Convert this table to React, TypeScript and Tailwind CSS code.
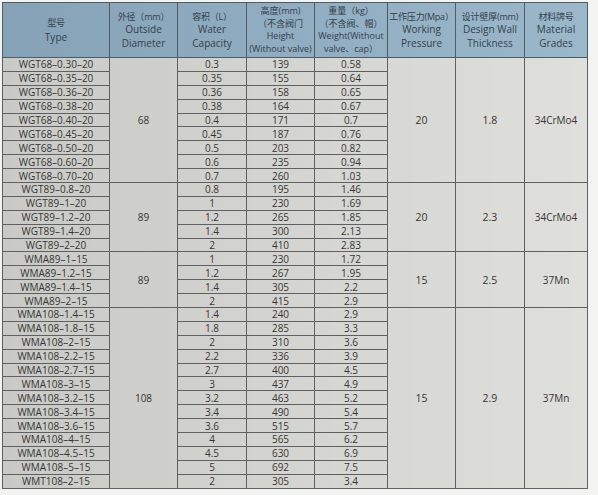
type Group = {
  dia: string;
  pressure: string;
  wall: string;
  mat: string;
  rows: [string, string, string, string][];
};

const groups: Group[] = [
  {
    dia: "68",
    pressure: "20",
    wall: "1.8",
    mat: "34CrMo4",
    rows: [
      ["WGT68–0.30–20", "0.3", "139", "0.58"],
      ["WGT68–0.35–20", "0.35", "155", "0.64"],
      ["WGT68–0.36–20", "0.36", "158", "0.65"],
      ["WGT68–0.38–20", "0.38", "164", "0.67"],
      ["WGT68–0.40–20", "0.4", "171", "0.7"],
      ["WGT68–0.45–20", "0.45", "187", "0.76"],
      ["WGT68–0.50–20", "0.5", "203", "0.82"],
      ["WGT68–0.60–20", "0.6", "235", "0.94"],
      ["WGT68–0.70–20", "0.7", "260", "1.03"],
    ],
  },
  {
    dia: "89",
    pressure: "20",
    wall: "2.3",
    mat: "34CrMo4",
    rows: [
      ["WGT89–0.8–20", "0.8", "195", "1.46"],
      ["WGT89–1–20", "1", "230", "1.69"],
      ["WGT89–1.2–20", "1.2", "265", "1.85"],
      ["WGT89–1.4–20", "1.4", "300", "2.13"],
      ["WGT89–2–20", "2", "410", "2.83"],
    ],
  },
  {
    dia: "89",
    pressure: "15",
    wall: "2.5",
    mat: "37Mn",
    rows: [
      ["WMA89–1–15", "1", "230", "1.72"],
      ["WMA89–1.2–15", "1.2", "267", "1.95"],
      ["WMA89–1.4–15", "1.4", "305", "2.2"],
      ["WMA89–2–15", "2", "415", "2.9"],
    ],
  },
  {
    dia: "108",
    pressure: "15",
    wall: "2.9",
    mat: "37Mn",
    rows: [
      ["WMA108–1.4–15", "1.4", "240", "2.9"],
      ["WMA108–1.8–15", "1.8", "285", "3.3"],
      ["WMA108–2–15", "2", "310", "3.6"],
      ["WMA108–2.2–15", "2.2", "336", "3.9"],
      ["WMA108–2.7–15", "2.7", "400", "4.5"],
      ["WMA108–3–15", "3", "437", "4.9"],
      ["WMA108–3.2–15", "3.2", "463", "5.2"],
      ["WMA108–3.4–15", "3.4", "490", "5.4"],
      ["WMA108–3.6–15", "3.6", "515", "5.7"],
      ["WMA108–4–15", "4", "565", "6.2"],
      ["WMA108–4.5–15", "4.5", "630", "6.9"],
      ["WMA108–5–15", "5", "692", "7.5"],
      ["WMT108–2–15", "2", "305", "3.4"],
    ],
  },
];

const headers: string[][] = [
  ["型号", "Type"],
  ["外径（mm）", "Outside", "Diameter"],
  ["容积（L）", "Water", "Capacity"],
  ["高度(mm)", "（不含阀门", "Height", "(Without valve)"],
  ["重量（kg）", "（不含阀、帽）", "Weight(Without", "valve、cap）"],
  ["工作压力(Mpa）", "Working", "Pressure"],
  ["设计壁厚(mm)", "Design Wall", "Thickness"],
  ["材料牌号", "Material", "Grades"],
];

const widths = [107, 68, 69, 68, 73, 68, 69, 63];

export default function App() {
  return (
    <div className="w-[598px] h-[495px] bg-[#f3f3f1] pt-[2px] pl-[2px] overflow-hidden font-['Open_Sans','Noto_Sans_CJK_SC',sans-serif] text-[#363636]">
      <table className="table-fixed border-collapse w-[585px] bg-linear-to-r from-[#c9cac5] via-[#d4d4d0] to-[#dfdfdb]">
        <colgroup>
          {widths.map((w, i) => (
            <col key={i} style={{ width: w }} />
          ))}
        </colgroup>
        <thead>
          <tr className="h-[55px] bg-linear-to-r from-[#86a2b7] to-[#9bb8cb]">
            {headers.map((lines, i) => {
              const dense = lines.length === 4;
              return (
                <th
                  key={i}
                  className={`border border-[#4e5c66] p-0 font-normal text-[#34414b] align-middle ${
                    dense ? "leading-[12.5px]" : lines.length === 2 ? "leading-[14px]" : "leading-[13.5px]"
                  }`}
                >
                  {lines.map((l, j) => (
                    <div
                      key={j}
                      className={`whitespace-nowrap ${
                        dense ? "text-[9px]" : /[\u4e00-\u9fff]/.test(l) ? "text-[9px] tracking-[-0.2px]" : "text-[10px]"
                      }`}
                    >
                      {l}
                    </div>
                  ))}
                </th>
              );
            })}
          </tr>
        </thead>
        <tbody className="text-[10px] leading-[12px]">
          {groups.map((g, gi) =>
            g.rows.map((r, ri) => (
              <tr key={`${gi}-${ri}`} className="h-[13.9px]">
                <td className="border border-[#5e6062] p-0 text-center whitespace-nowrap">{r[0]}</td>
                {ri === 0 && (
                  <td rowSpan={g.rows.length} className="border border-[#5e6062] p-0 text-center align-middle">
                    {g.dia}
                  </td>
                )}
                <td className="border border-[#5e6062] p-0 text-center">{r[1]}</td>
                <td className="border border-[#5e6062] p-0 text-center">{r[2]}</td>
                <td className="border border-[#5e6062] p-0 text-center">{r[3]}</td>
                {ri === 0 && (
                  <>
                    <td rowSpan={g.rows.length} className="border border-[#5e6062] p-0 text-center align-middle text-[10.5px]">
                      {g.pressure}
                    </td>
                    <td rowSpan={g.rows.length} className="border border-[#5e6062] p-0 text-center align-middle text-[10.5px]">
                      {g.wall}
                    </td>
                    <td rowSpan={g.rows.length} className="border border-[#5e6062] p-0 text-center align-middle">
                      {g.mat}
                    </td>
                  </>
                )}
              </tr>
            ))
          )}
        </tbody>
      </table>
    </div>
  );
}
